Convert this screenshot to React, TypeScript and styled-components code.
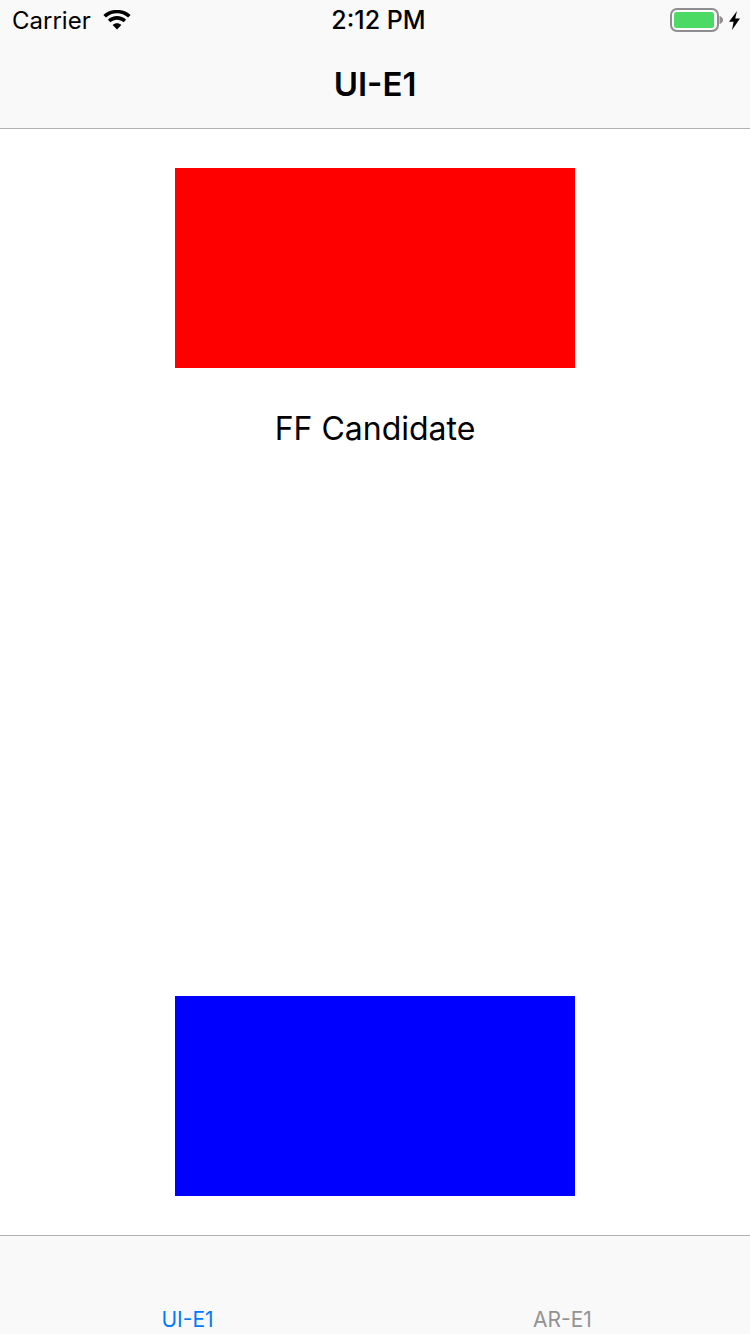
import React from "react";
import styled, { createGlobalStyle } from "styled-components";

const Global = createGlobalStyle`
  html, body { margin: 0; padding: 0; background: #fff; }
  body { font-family: Inter, "Liberation Sans", sans-serif; }
`;

const Page = styled.div`
  width: 750px;
  height: 1334px;
  display: flex;
  flex-direction: column;
  overflow: hidden;
  background: #fff;
`;

const Header = styled.header`
  height: 128px;
  flex: none;
  background: #f9f9f9;
  border-bottom: 1px solid #b2b2b2;
  display: flex;
  flex-direction: column;
`;

const StatusBar = styled.div`
  height: 40px;
  padding: 0 10px 0 12px;
  display: grid;
  grid-template-columns: 1fr auto 1fr;
  align-items: center;
  font-size: 24px;
  color: #000;
`;

const StatusLeft = styled.div`
  display: flex;
  align-items: center;
  gap: 12px;
`;

const StatusRight = styled.div`
  display: flex;
  align-items: center;
  justify-content: flex-end;
  gap: 6px;
`;

const Time = styled.div`
  font-size: 25px;
  font-weight: 500;
  margin-left: 5px;
`;

const NavBar = styled.div`
  flex: 1;
  display: flex;
  align-items: center;
  justify-content: center;
  font-size: 33px;
  font-weight: 600;
  color: #000;
`;

const Main = styled.main`
  flex: 1;
  padding: 39px 0;
  display: flex;
  flex-direction: column;
  align-items: center;
  justify-content: space-between;
`;

const Top = styled.div`
  display: flex;
  flex-direction: column;
  align-items: center;
  gap: 39px;
`;

const Block = styled.div<{ $color: string }>`
  width: 400px;
  height: 200px;
  background: ${(p) => p.$color};
`;

const Label = styled.div`
  font-size: 32px;
  line-height: 44px;
  color: #000;
`;

const TabBar = styled.footer`
  height: 98px;
  flex: none;
  background: #f9f9f9;
  border-top: 1px solid #b2b2b2;
  display: grid;
  grid-template-columns: 1fr 1fr;
`;

const Tab = styled.div<{ $active?: boolean }>`
  display: flex;
  align-items: flex-end;
  justify-content: center;
  font-size: 21px;
  line-height: 24px;
  padding-bottom: 2px;
  color: ${(p) => (p.$active ? "#007aff" : "#929292")};
`;

const Wifi = () => (
  <svg width="28" height="20" viewBox="0 0 30 22">
    <path d="M15 21.5 L10.2 16.4 C13 13.8 17 13.8 19.8 16.4 Z" fill="#000" />
    <path d="M7.8 13.6 L5 10.6 C10.4 5.2 19.6 5.2 25 10.6 L22.2 13.6 C18.2 9.8 11.8 9.8 7.8 13.6 Z" fill="#000" />
    <path d="M2.8 8.2 L0 5.4 C8.2 -2 21.8 -2 30 5.4 L27.2 8.2 C20.4 2 9.6 2 2.8 8.2 Z" fill="#000" />
  </svg>
);

const Battery = () => (
  <svg width="53" height="24" viewBox="0 0 53 24">
    <rect x="1" y="1" width="47" height="22" rx="6" fill="none" stroke="#8e8e8e" strokeWidth="2" />
    <rect x="4" y="4" width="40" height="16" rx="2.5" fill="#4cd964" />
    <path d="M49.5 8 C51.5 8.5 53 10 53 12 C53 14 51.5 15.5 49.5 16 Z" fill="#8e8e8e" />
  </svg>
);

const Bolt = () => (
  <svg width="11" height="19" viewBox="0 0 11 19">
    <path d="M8 0 L0 10.8 H4.6 L3 19 L11 7.4 H6.2 Z" fill="#000" />
  </svg>
);

export default function App() {
  return (
    <Page>
      <Global />
      <Header>
        <StatusBar>
          <StatusLeft>
            <span>Carrier</span>
            <Wifi />
          </StatusLeft>
          <Time>2:12 PM</Time>
          <StatusRight>
            <Battery />
            <Bolt />
          </StatusRight>
        </StatusBar>
        <NavBar>UI-E1</NavBar>
      </Header>
      <Main>
        <Top>
          <Block $color="#ff0000" />
          <Label>FF Candidate</Label>
        </Top>
        <Block $color="#0000ff" />
      </Main>
      <TabBar>
        <Tab $active>UI-E1</Tab>
        <Tab>AR-E1</Tab>
      </TabBar>
    </Page>
  );
}
